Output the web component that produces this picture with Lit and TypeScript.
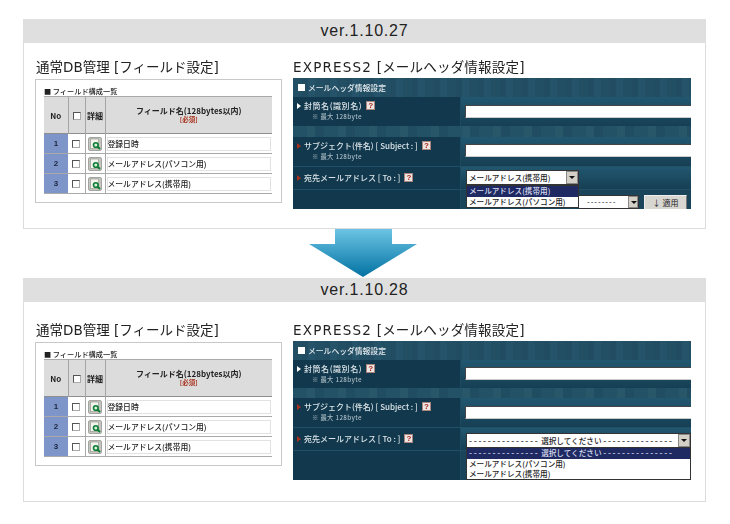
import { LitElement, html, css, svg } from "lit";
import { customElement } from "lit/decorators.js";

const help = html`<span class="help">?</span>`;
const lens = svg`<svg class="lens" width="14" height="14" viewBox="0 0 14 14">
  <rect x="0.5" y="0.5" width="13" height="13" rx="1.5" fill="#c6c6c0" stroke="#a4a4a0"/>
  <rect x="2.5" y="2" width="8" height="9.5" fill="#f4f4ee" stroke="#8e8e88" stroke-width="0.6"/>
  <circle cx="7.8" cy="8" r="2.3" fill="#d8f0dc" stroke="#0e7d35" stroke-width="1.6"/>
  <path d="M9.4 9.6 L12 12" stroke="#0e7d35" stroke-width="2"/>
</svg>`;
const rows = ["登録日時", "メールアドレス(パソコン用)", "メールアドレス(携帯用)"];
const dashes = html`<span class="dash">---------------</span>`;
const placeholder = html`${dashes} 選択してください ${dashes}`;

@customElement("app-root")
class AppRoot extends LitElement {
  static styles = css`
    :host { display: block; width: 730px; height: 524px; background: #fff; overflow: hidden;
      font-family: "Noto Sans CJK JP", "Liberation Sans", sans-serif; color: #222; }
    .page { padding: 19px 24px 0 23px; display: flex; flex-direction: column; filter: blur(0.3px); }
    .panel { border: 1px solid #dcdcdc; border-top: 0; height: 210px; display: flex; flex-direction: column; box-sizing: border-box; }
    .panel.second { height: 224px; }
    .bar { height: 24px; background: #dfdfdf; flex: none; margin: 0 -1px; text-align: center;
      font: 16px/24px "Liberation Sans", sans-serif; color: #222; letter-spacing: 0.8px; }
    .body { display: flex; padding: 16px 13px 0 11px; gap: 11px; }
    .second .body { padding-top: 20px; }
    .col-l { width: 247px; flex: none; }
    .col-r { width: 398px; flex: none; position: relative; }
    h2 { margin: 0; font-weight: 400; font-size: 13.5px; line-height: 17px; letter-spacing: 0; color: #222; white-space: nowrap; padding-left: 1px;
      font-family: "DejaVu Sans", "Noto Sans CJK JP", sans-serif; }
    .col-r h2 { padding-left: 0; letter-spacing: 0.2px; }
    .col-r h2 .latin { letter-spacing: 1.2px; }

    .card { margin-top: 3px; height: 124px; box-sizing: border-box; border: 1px solid #c8c8c8; padding: 6px 9px 0 8px; }
    .cap { font-size: 7.2px; line-height: 10px; height: 10px; color: #222; white-space: nowrap; font-weight: 500; }
    table { border-collapse: collapse; table-layout: fixed; width: 228px; margin-top: 0; border-top: 1px solid #a9a9a9; border-bottom: 1px solid #a9a9a9; }
    th { background: #dcdcdc; height: 36px; padding: 0; font-size: 8px; line-height: 9px; font-weight: 700; border-right: 1px solid #a5a5a5; color: #222; }
    th:last-child, td:last-child { border-right: 0; }
    th .req { display: block; color: #a8321c; font-size: 6.5px; line-height: 9px; }
    th .no { font-family: "Liberation Sans", sans-serif; }
    td { height: 19px; padding: 0; text-align: center; border-top: 1px solid #a9a9a9; border-right: 1px solid #a9a9a9; background: #fff; font-size: 8px; line-height: 10px; }
    tr:first-child td { border-top: 1px solid #8f8f8f; }
    td.num { background: #7d95c8; font: 700 8px "Liberation Sans", sans-serif; color: #1c2440; border-right: 0; }
    .cb { display: inline-block; box-sizing: border-box; width: 8px; height: 8px; vertical-align: middle; background: #fff; border: 1px solid #555; border-right-color: #aaa; border-bottom-color: #aaa; }
    .lens { display: block; margin: 0 auto; }
    .field { box-sizing: border-box; height: 14px; margin: 0 1px 0 1px; border: 1px solid #e2e2e2; text-align: left; font-size: 7.8px; line-height: 12px; color: #222; white-space: nowrap; font-weight: 500; }

    .dark { margin-top: 2px; height: 131px; position: relative; background: #1a4459; color: #dbe4e8; display: flex; flex-direction: column; overflow: hidden; }
    .dark.two { height: 139px; }
    .head { height: 19px; flex: none; display: flex; align-items: center; padding-left: 5px; gap: 3px; font-size: 7.8px; font-weight: 500; color: #e4ebee;
      background: repeating-linear-gradient(90deg, #234f65 0 9px, #214c62 9px 15px, #25536a 15px 22px); }
    .sq { width: 7px; height: 7px; background: #fff; flex: none; }
    .row { display: grid; grid-template-columns: 167px 1fr; flex: none; }
    .label { background: #11384c; box-sizing: border-box; padding: 3px 0 0 4px; font-size: 8px; line-height: 11px; white-space: nowrap; font-weight: 500; }
    .label.tall { height: 29px; }
    .two .a .label.tall { height: 28px; }
    .wide { letter-spacing: 0.55px; }
    .note { display: block; padding-left: 15px; font-size: 6.3px; line-height: 9px; margin-top: 1px; color: #a8bac3; letter-spacing: 0.35px; }
    .tri { display: inline-block; width: 0; height: 0; border-left: 4px solid #fff; border-top: 3px solid transparent; border-bottom: 3px solid transparent; margin-right: 3px; vertical-align: 0; }
    .tri.red { border-left-color: #a8301e; }
    .help { display: inline-block; width: 9px; height: 9px; margin-left: 4px; background: #eee6e2; color: #a8201a; font: 700 8px/9px "Liberation Sans", sans-serif; letter-spacing: 0; text-align: center; vertical-align: 1px; box-shadow: inset 0 0 0 1px #a8847c; }
    .cell { border-left: 1px solid #1c4a5f; background: linear-gradient(180deg, #225770, #163f53); padding: 8px 0 0 4px; box-sizing: border-box; }
    .one .b .cell, .two .a .cell { padding-top: 7px; }
    .gap { height: 11px; flex: none; background: repeating-linear-gradient(90deg, #235267 0 14px, #275769 14px 22px, #214d62 22px 31px); }
    .two .gap { height: 10px; }
    .input { height: 13px; background: #fff; box-sizing: border-box; border-top: 1px solid #444; border-left: 1px solid #444; border-bottom: 1px solid #ccc; }
    .r3 { border-top: 1px solid #1f5067; }
    .r3 .label, .r3 .cell { height: 22px; }
    .r3 .label { padding-top: 5px; }
    .r4 { border-top: 1px solid #1f5067; flex: 1; }
    .r4 .cell { background: #1a4459; }

    .sel { position: absolute; box-sizing: border-box; height: 15px; background: #fff; border: 1px solid #333; color: #222; font-size: 7.6px; line-height: 13px; white-space: nowrap; padding-left: 2px; z-index: 2; font-weight: 500; }
    .arrow-btn { position: absolute; right: 0; top: 0; width: 12px; height: 13px; background: #d4d0c8; border: 1px solid #888; box-sizing: border-box; }
    .arrow-btn::after { content: ""; position: absolute; left: 2px; top: 4px; border-left: 3px solid transparent; border-right: 3px solid transparent; border-top: 3px solid #111; }
    .menu { position: absolute; box-sizing: border-box; background: #fff; border: 1px solid #333; color: #222; font-size: 7.6px; line-height: 10px; white-space: nowrap; z-index: 3; font-weight: 500; }
    .menu div { padding-left: 2px; height: 10px; }
    .menu .on { background: #1f2a63; color: #d8dcf0; height: 11px; }
    .dash { font: 9px "Liberation Sans", sans-serif; letter-spacing: 1.7px; }
    .sel.s1 { left: 173px; top: 92px; width: 113px; }
    .menu.s1 { left: 173px; top: 107px; width: 113px; height: 23px; }
    .behind { position: absolute; left: 286px; top: 117px; width: 60px; height: 14px; background: #fff; border: 1px solid #333; border-left: 0; box-sizing: border-box; color: #222; font: 8px/12px "Liberation Sans", sans-serif; padding-left: 8px; white-space: nowrap; letter-spacing: 1px; }
    .behind .arrow-btn { width: 10px; height: 12px; }
    .apply { position: absolute; left: 351px; top: 117px; width: 43px; height: 15px; background: #d8d6d0; border: 1px solid #eee; border-right-color: #777; box-sizing: border-box; color: #222; font-size: 8px; line-height: 13px; text-align: center; }
    .sel.s2 { left: 173px; top: 92px; width: 225px; }
    .menu.s2 { left: 173px; top: 106px; width: 225px; height: 33px; }
    .arrow { flex: none; height: 49px; display: block; margin-left: 286px; }
  `;

  left() {
    return html`<div class="col-l">
      <h2>通常DB管理 [フィールド設定]</h2>
      <div class="card">
        <div class="cap">■ フィールド構成一覧</div>
        <table>
          <colgroup><col style="width:24px" /><col style="width:17px" /><col style="width:20px" /><col /></colgroup>
          <thead><tr>
            <th class="no">No</th><th><span class="cb"></span></th><th>詳細</th>
            <th>フィールド名(128bytes以内)<span class="req">[必須]</span></th>
          </tr></thead>
          <tbody>
            ${rows.map((r, i) => html`<tr>
              <td class="num">${i + 1}</td>
              <td><span class="cb"></span></td>
              <td>${lens}</td>
              <td><div class="field">${r}</div></td>
            </tr>`)}
          </tbody>
        </table>
      </div>
    </div>`;
  }

  right(kind: "one" | "two") {
    return html`<div class="col-r">
      <h2><span class="latin">EXPRESS2</span> [メールヘッダ情報設定]</h2>
      <div class="dark ${kind}">
        <div class="head"><span class="sq"></span>メールヘッダ情報設定</div>
        <div class="row a">
          <div class="label tall"><span class="tri"></span><span class="wide">封筒名(識別名)</span>${help}<span class="note">※ 最大 128byte</span></div>
          <div class="cell"><div class="input"></div></div>
        </div>
        <div class="gap"></div>
        <div class="row b">
          <div class="label tall"><span class="tri red"></span>サブジェクト(件名) [ Subject : ]${help}<span class="note">※ 最大 128byte</span></div>
          <div class="cell"><div class="input"></div></div>
        </div>
        <div class="row r3">
          <div class="label"><span class="tri red"></span>宛先メールアドレス [ To : ]${help}</div>
          <div class="cell"></div>
        </div>
        <div class="row r4"><div class="label"></div><div class="cell"></div></div>
        ${kind === "one"
          ? html`
              <div class="behind">--------<span class="arrow-btn"></span></div>
              <div class="apply">↓ 適用</div>
              <div class="sel s1">メールアドレス(携帯用)<span class="arrow-btn"></span></div>
              <div class="menu s1"><div class="on">メールアドレス(携帯用)</div><div>メールアドレス(パソコン用)</div></div>`
          : html`
              <div class="sel s2">${placeholder}<span class="arrow-btn"></span></div>
              <div class="menu s2"><div class="on">${placeholder}</div><div>メールアドレス(パソコン用)</div><div>メールアドレス(携帯用)</div></div>`}
      </div>
    </div>`;
  }

  render() {
    return html`<div class="page">
      <section class="panel">
        <div class="bar">ver.1.10.27</div>
        <div class="body">${this.left()}${this.right("one")}</div>
      </section>
      <svg class="arrow" width="108" height="49" viewBox="0 0 108 49">
        <defs><linearGradient id="g" x1="0" y1="0" x2="0" y2="1"><stop offset="0" stop-color="#6cc4e4"/><stop offset="1" stop-color="#0272a2"/></linearGradient></defs>
        <path d="M26 0 H83 V15 H108 L54 48 L0 15 H26 Z" fill="url(#g)"/>
      </svg>
      <section class="panel second">
        <div class="bar">ver.1.10.28</div>
        <div class="body">${this.left()}${this.right("two")}</div>
      </section>
    </div>`;
  }
}
